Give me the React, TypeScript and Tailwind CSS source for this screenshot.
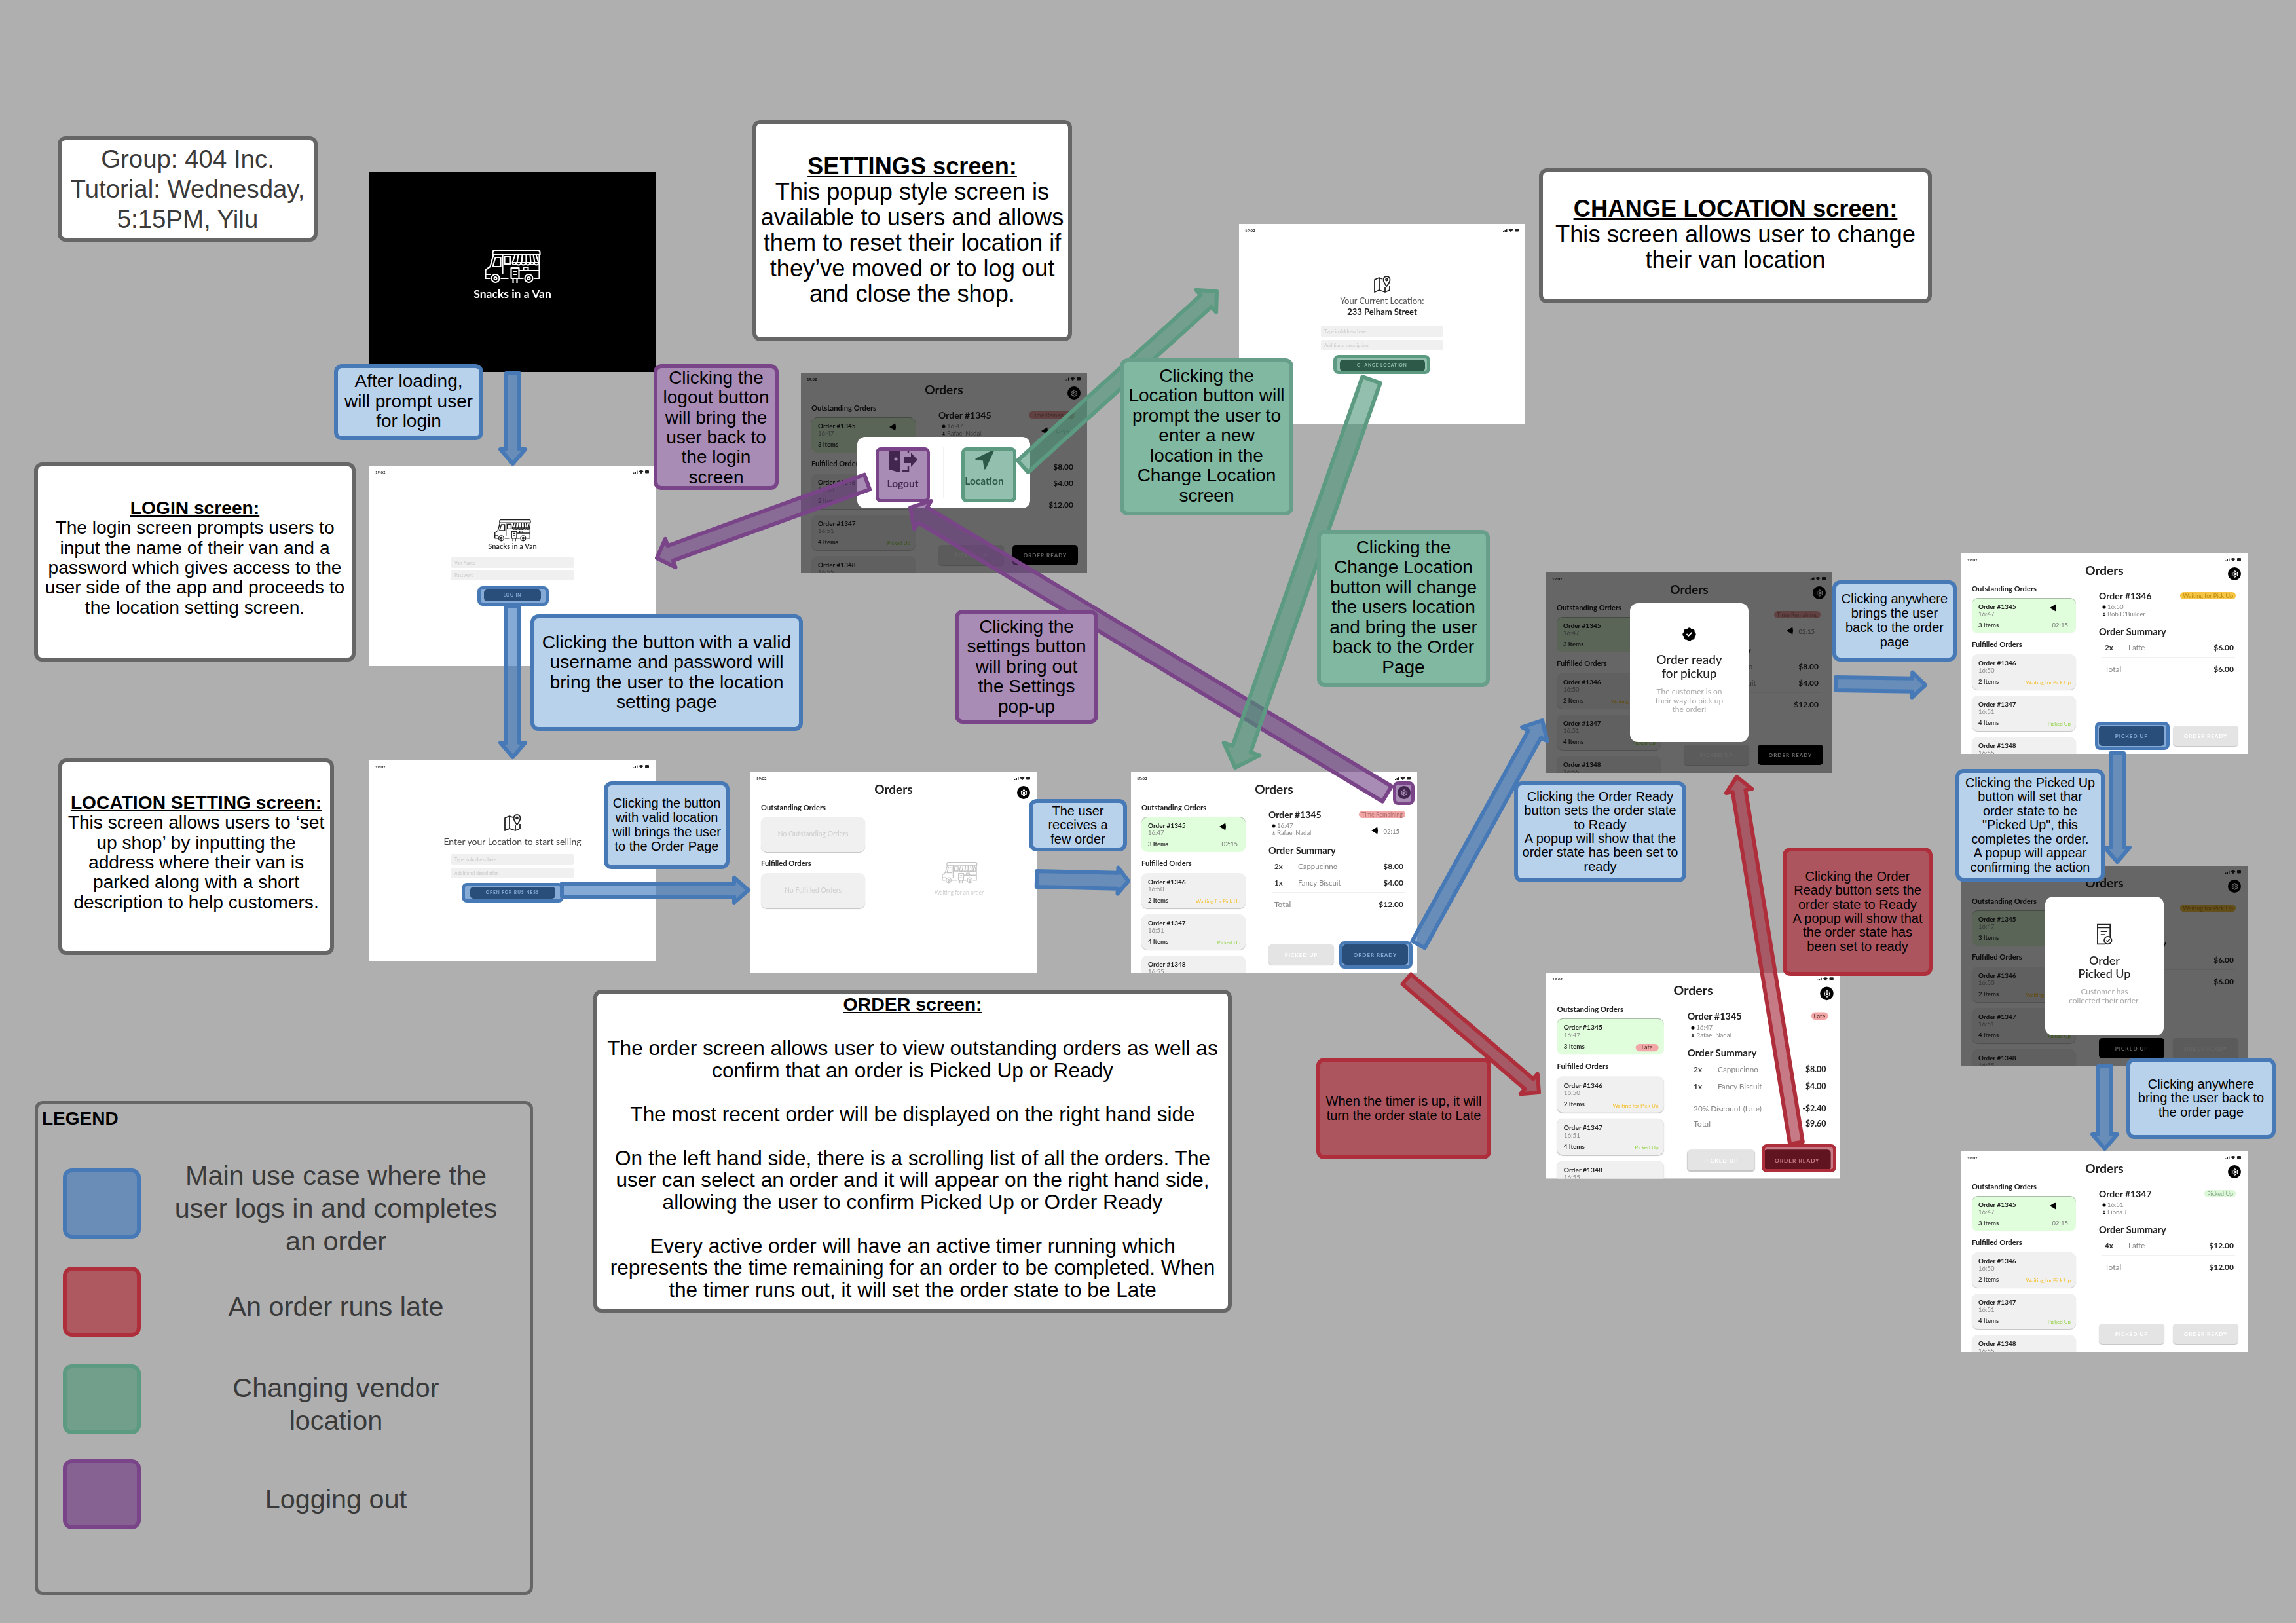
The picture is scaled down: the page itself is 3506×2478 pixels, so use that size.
import { BadgeCheck, Settings, User, Clock } from "lucide-react";
import type { ReactNode } from "react";

type Item = [string, string, string];

type Detail = {
  id: string;
  badge: string;
  badgeClass: string;
  time: string;
  name: string;
  timer?: boolean;
  items: Item[];
  discount?: string;
  total: string;
  picked?: boolean;
  ready?: boolean;
  late?: boolean;
};

const order1345: Detail = {
  id: "1345",
  badge: "Time Remaining",
  badgeClass: "bg-[#f3a6a6] text-[#a86a6a]",
  time: "16:47",
  name: "Rafael Nadal",
  timer: true,
  items: [
    ["2x", "Cappucinno", "$8.00"],
    ["1x", "Fancy Biscuit", "$4.00"],
  ],
  total: "$12.00",
  ready: true,
};

const order1346: Detail = {
  id: "1346",
  badge: "Waiting for Pick Up",
  badgeClass: "bg-[#f7c544] text-[#b88a10]",
  time: "16:50",
  name: "Bob D'Builder",
  items: [["2x", "Latte", "$6.00"]],
  total: "$6.00",
  picked: true,
};

const order1347: Detail = {
  id: "1347",
  badge: "Picked Up",
  badgeClass: "bg-[#dcf8d8] text-[#8aa888]",
  time: "16:51",
  name: "Fiona J",
  items: [["4x", "Latte", "$12.00"]],
  total: "$12.00",
};

const order1345Late: Detail = {
  id: "1345",
  badge: "Late",
  badgeClass: "bg-[#f3a6a6] text-[#5a3a3a] font-bold",
  time: "16:47",
  name: "Rafael Nadal",
  items: [
    ["2x", "Cappucinno", "$8.00"],
    ["1x", "Fancy Biscuit", "$4.00"],
  ],
  discount: "-$2.40",
  total: "$9.60",
  ready: true,
  late: true,
};

const VanIcon = ({ className }: { className: string }) => (
  <svg viewBox="0 0 86 52" fill="none" stroke="currentColor" strokeWidth="2.200" strokeLinejoin="round" className={className}>
    <path d="M13 8V4a3 3 0 0 1 3-3h66a3 3 0 0 1 3 3v4z" />
    <path d="M14 8 9 26l-7 5v13h7M25 44h12M52 44h8M76 44h8V8M2 38h8" />
    <path d="M17 12h8v14H13z" />
    <path d="M28 8v30" />
    <rect x="31" y="11" width="9" height="11" />
    <path d="M47 8 43 20h40L79 8M52 8l-2 12M58 8l-1 12M64 8v12M70 8l1 12M75 8l2 12" />
    <path d="M43 20a3 3 0 0 0 6 0 3 3 0 0 0 7 0 3 3 0 0 0 7 0 3 3 0 0 0 7 0 3 3 0 0 0 6 0 3 3 0 0 0 7 0" />
    <path d="M53 32h31M60 32v-5h7v5" />
    <rect x="41" y="28" width="12" height="16" />
    <path d="M44 33h6M44 38h6M44 44v7M50 44v7" />
    <circle cx="17" cy="44" r="6" />
    <circle cx="17" cy="44" r="2" />
    <circle cx="68" cy="44" r="6" />
    <circle cx="68" cy="44" r="2" />
  </svg>
);

const MapIcon = () => (
  <svg viewBox="0 0 26 26" fill="none" stroke="#222" strokeWidth="1.800" strokeLinejoin="round" className="h-[26px] w-[26px]">
    <path d="M13 5 8 3 1 6v19l7-3 9 3 7-3v-7" />
    <path d="M8 3v19M17 17v8" />
    <path d="M19.500 1a5 5 0 0 0-5 5c0 4 5 10 5 10s5-6 5-10a5 5 0 0 0-5-5z" />
    <circle cx="19.500" cy="6" r="1.500" />
  </svg>
);

const Pie = ({ className }: { className: string }) => (
  <svg viewBox="0 0 12 12" className={className}>
    <path d="M0 6 10 0q2 6 0 12z" fill="#000" />
  </svg>
);

const StatusBar = () => (
  <div className="flex h-[16px] items-center justify-between px-[9px] pt-[2px] text-[6px] font-bold text-[#222]">
    <span>19:02</span>
    <svg viewBox="0 0 25 6" className="h-[6px] w-[25px]" fill="#222">
      <path d="M0 6h1.500V4.500H0zM2.500 6H4V3H2.500zM5 6h1.500V1.500H5z" />
      <path d="M8.500 2.500a5 5 0 0 1 7 0L12 6.500z" />
      <rect x="18" y="1" width="6" height="4.500" rx="1" />
    </svg>
  </div>
);

const Field = ({ label, className }: { label: string; className?: string }) => (
  <div className={`flex h-[16px] w-[187px] items-center rounded-[2px] bg-[#f0f0f0] px-[5px] text-[7px] text-[#c8c8c8] ${className ?? ""}`}>
    {label}
  </div>
);

const Shell = ({ className, children }: { className: string; children: ReactNode }) => (
  <div className={`absolute h-[306px] w-[437px] overflow-hidden bg-white font-['Lato',sans-serif] text-black blur-[0.4px] ${className}`}>
    {children}
  </div>
);

const OrderCard = ({
  id,
  time,
  items,
  status,
  statusClass,
  selected,
  timer,
  late,
}: {
  id: string;
  time: string;
  items: string;
  status?: string;
  statusClass?: string;
  selected?: boolean;
  timer?: boolean;
  late?: boolean;
}) => (
  <div
    className={`relative mb-[9px] h-[54px] shrink-0 rounded-[9px] px-[10px] pt-[8px] ${
      selected
        ? "bg-[#e0fddc] shadow-[inset_0_1px_0_#a8bca8]"
        : "bg-[#f0f0f0] shadow-[0_1px_1px_#c4c4c4]"
    }`}
  >
    <div className="text-[10px] font-bold leading-[11px] text-[#222]">Order #{id}</div>
    <div className="text-[9.500px] leading-[11px] text-[#888]">{time}</div>
    <div className="mt-[6px] flex items-center justify-between text-[9.500px] font-bold leading-[11px] text-[#333]">
      <span>{items}</span>
      {timer && <span className="mr-[2px] font-normal text-[#777]">02:15</span>}
    </div>
    {timer && <Pie className="absolute left-[119px] top-[9px] h-[12px] w-[11px]" />}
    {late && (
      <span className="absolute bottom-[5px] right-[8px] rounded-full bg-[#f3a6a6] px-[9px] text-[8.500px] font-bold leading-[11px] text-[#5a3a3a]">
        Late
      </span>
    )}
    {status && (
      <span className={`absolute bottom-[6px] right-[8px] text-[8px] leading-[10px] ${statusClass}`}>{status}</span>
    )}
  </div>
);

const OrderList = ({ late }: { late?: boolean }) => (
  <div className="flex h-full w-[159px] shrink-0 flex-col">
    <div className="text-[11.200px] font-bold leading-[14px] text-[#222]">Outstanding Orders</div>
    <div className="mt-[7px]">
      <OrderCard id="1345" time="16:47" items="3 Items" selected timer={!late} late={late} />
    </div>
    <div className="mt-px text-[11.200px] font-bold leading-[14px] text-[#222]">Fulfilled Orders</div>
    <div className="mt-[8px]">
      <OrderCard id="1346" time="16:50" items="2 Items" status="Waiting for Pick Up" statusClass="text-[#f5bd20]" />
      <OrderCard id="1347" time="16:51" items="4 Items" status="Picked Up" statusClass="text-[#8ed13f]" />
      <OrderCard id="1348" time="16:55" items="2 Items" />
    </div>
  </div>
);

const ActionButton = ({ label, active }: { label: string; active?: boolean }) => (
  <div
    className={`flex h-[31px] w-[100px] items-center justify-center rounded-[5px] text-[8px] font-bold tracking-[1px] text-white ${
      active ? "bg-black" : "bg-[#e4e4e4] shadow-[0_1px_1px_#c4c4c4]"
    }`}
  >
    {label}
  </div>
);

const OrderPane = ({ order }: { order: Detail }) => (
  <div className="ml-[35px] flex h-full w-[214px] flex-col">
    <div className="mt-[10px] flex h-[14px] items-center justify-between pr-[5px]">
      <span className="text-[14px] font-bold text-[#222]">Order #{order.id}</span>
      <span className={`rounded-full px-[4px] text-[9px] leading-[11px] ${order.badgeClass}`}>{order.badge}</span>
    </div>
    <div className="mt-[5px] flex justify-between pl-[5px] pr-[14px]">
      <div className="text-[9.500px] leading-[11px] text-[#888]">
        <div className="flex items-center gap-[2px]">
          <Clock className="h-[6px] w-[6px] fill-black" />
          {order.time}
        </div>
        <div className="flex items-center gap-[2px]">
          <User className="h-[6px] w-[6px] fill-black" />
          {order.name}
        </div>
      </div>
      {order.timer && (
        <div className="flex items-end gap-[8px] text-[9.500px] leading-[14px] text-[#777]">
          <Pie className="mb-[3px] h-[12px] w-[11px]" />
          <span>02:15</span>
        </div>
      )}
    </div>
    <div className="mt-[15px] h-[14px] text-[14.600px] font-bold leading-[14px] text-[#222]">Order Summary</div>
    <div className="mt-[10px] flex flex-col gap-[11px]">
      {order.items.map(([qty, name, price]) => (
        <div key={name} className="flex h-[14px] items-center pl-[9px] pr-[8px] text-[11.500px]">
          <span className="w-[36px] font-bold text-[#333]">{qty}</span>
          <span className="text-[#888]">{name}</span>
          <span className="ml-auto text-[12px] font-bold text-[#222]">{price}</span>
        </div>
      ))}
    </div>
    <div className="ml-[5px] mr-[6px] mt-[7px] h-px bg-[#f0f0f0]" />
    {order.discount && (
      <div className="mt-[11px] flex h-[14px] items-center pl-[9px] pr-[8px] text-[11.500px] text-[#888]">
        <span>20% Discount (Late)</span>
        <span className="ml-auto text-[12px] font-bold text-[#222]">{order.discount}</span>
      </div>
    )}
    <div className={`${order.discount ? "mt-[9px]" : "mt-[11px]"} flex h-[14px] items-center pl-[9px] pr-[8px] text-[12px] text-[#888]`}>
      <span>Total</span>
      <span className="ml-auto font-bold text-[#222]">{order.total}</span>
    </div>
    <div className="mb-[12px] mt-auto flex gap-[13px]">
      <ActionButton label="PICKED UP" active={order.picked} />
      <ActionButton label="ORDER READY" active={order.ready} />
    </div>
  </div>
);

const Gear = () => (
  <div className="absolute right-[10px] top-[21px] flex h-[20px] w-[20px] items-center justify-center rounded-full bg-black">
    <Settings className="h-[11px] w-[11px] text-white" strokeWidth={2.5} />
  </div>
);

const OrdersFrame = ({ left, right }: { left: ReactNode; right: ReactNode }) => (
  <>
    <StatusBar />
    <div className="h-[31px] text-center text-[19px] font-bold leading-[20px] text-[#222]">Orders</div>
    <Gear />
    <div className="flex h-[259px] pl-[16px]">
      {left}
      {right}
    </div>
  </>
);

const OrdersScreen = ({ order, className, children }: { order: Detail; className: string; children?: ReactNode }) => (
  <Shell className={className}>
    <OrdersFrame left={<OrderList late={order.late} />} right={<OrderPane order={order} />} />
    {children}
  </Shell>
);

const EmptyCard = ({ label }: { label: string }) => (
  <div className="flex h-[54px] shrink-0 items-center justify-center rounded-[9px] bg-[#f0f0f0] text-[10.500px] text-[#cfcfcf] shadow-[0_1px_1px_#c4c4c4]">
    {label}
  </div>
);

const EmptyOrdersScreen = ({ className }: { className: string }) => (
  <Shell className={className}>
    <OrdersFrame
      left={
        <div className="flex h-full w-[159px] shrink-0 flex-col">
          <div className="text-[11.200px] font-bold leading-[14px] text-[#222]">Outstanding Orders</div>
          <div className="mt-[7px]">
            <EmptyCard label="No Outstanding Orders" />
          </div>
          <div className="mt-[10px] text-[11.200px] font-bold leading-[14px] text-[#222]">Fulfilled Orders</div>
          <div className="mt-[8px]">
            <EmptyCard label="No Fulfilled Orders" />
          </div>
        </div>
      }
      right={
        <div className="flex flex-1 flex-col items-center pl-[50px] pr-[25px] pt-[90px]">
          <VanIcon className="h-[33px] w-[56px] text-[#c4c4c4]" />
          <div className="mt-[8px] text-[8.500px] text-[#cfcfcf]">Waiting for an order</div>
        </div>
      }
    />
  </Shell>
);

const Dim = () => <div className="absolute inset-0 bg-black/60" />;

const PopupCard = ({ children }: { children: ReactNode }) => (
  <div className="absolute left-[128px] top-[47px] flex h-[212px] w-[181px] flex-col items-center rounded-[12px] bg-white text-center">
    {children}
  </div>
);

const LogoutIcon = () => (
  <svg viewBox="0 0 44 38" className="h-[38px] w-[44px]" fill="#000">
    <path d="M2 4l13-4a2 2 0 0 1 3 2v34a2 2 0 0 1-3 2L2 34a2 2 0 0 1-2-2V6a2 2 0 0 1 2-2z" />
    <circle cx="11" cy="18" r="2.500" fill="#fff" />
    <path d="M21 2h9v7M21 36h9v-7" fill="none" stroke="#000" strokeWidth="2.500" />
    <path d="M24 14h10V8l10 11-10 11v-6H24z" />
  </svg>
);

const LocationIcon = () => (
  <svg viewBox="0 0 32 32" className="h-[30px] w-[30px]" fill="#000">
    <path d="M30 2 3 15l12 1 2 14z" stroke="#000" strokeWidth="3" strokeLinejoin="round" />
  </svg>
);

const ReceiptIcon = () => (
  <svg viewBox="0 0 26 34" className="h-[34px] w-[25px]" fill="none" stroke="#222" strokeWidth="1.800">
    <path d="M14 32H2V1h20v19" />
    <path d="M2 6h20M7 12h10M7 17h7" />
    <circle cx="18.500" cy="26" r="6" />
    <path d="m16 26 2 2 3.500-4" />
  </svg>
);

type ArrowSpec = {
  from: [number, number];
  to: [number, number];
  width: number;
  head: number;
  headLength: number;
  color: keyof typeof arrowColors;
};

const arrowColors = {
  blue: { fill: "rgba(64,122,189,0.64)", stroke: "#4679b6" },
  purple: { fill: "rgba(112,63,132,0.6)", stroke: "#7a4488" },
  green: { fill: "rgba(75,150,120,0.6)", stroke: "#5c9a82" },
  red: { fill: "rgba(158,33,52,0.6)", stroke: "#ae2f3b" },
};

const arrows: ArrowSpec[] = [
  { from: [783, 570], to: [783, 708], width: 20, head: 38, headLength: 22, color: "blue" },
  { from: [783, 926], to: [783, 1156], width: 20, head: 38, headLength: 22, color: "blue" },
  { from: [858, 1359], to: [1143, 1359], width: 20, head: 38, headLength: 22, color: "blue" },
  { from: [1583, 1342], to: [1723, 1345], width: 24, head: 40, headLength: 16, color: "blue" },
  { from: [2166, 1442], to: [2355, 1100], width: 22, head: 44, headLength: 24, color: "blue" },
  { from: [2803, 1044], to: [2940, 1046], width: 20, head: 38, headLength: 20, color: "blue" },
  { from: [3233, 1150], to: [3233, 1316], width: 20, head: 38, headLength: 22, color: "blue" },
  { from: [3214, 1628], to: [3214, 1754], width: 20, head: 38, headLength: 22, color: "blue" },
  { from: [1324, 736], to: [1003, 852], width: 24, head: 46, headLength: 22, color: "purple" },
  { from: [2118, 1212], to: [1390, 775], width: 27, head: 50, headLength: 22, color: "purple" },
  { from: [1562, 712], to: [1858, 445], width: 24, head: 46, headLength: 22, color: "green" },
  { from: [2094, 580], to: [1886, 1172], width: 29, head: 58, headLength: 30, color: "green" },
  { from: [2743, 1745], to: [2652, 1186], width: 20, head: 40, headLength: 22, color: "red" },
  { from: [2148, 1495], to: [2350, 1668], width: 20, head: 40, headLength: 20, color: "red" },
];

const arrowPoints = ({ from, to, width, head, headLength }: ArrowSpec) => {
  const dx = to[0] - from[0];
  const dy = to[1] - from[1];
  const len = Math.hypot(dx, dy);
  const ux = dx / len;
  const uy = dy / len;
  const bx = to[0] - ux * headLength;
  const by = to[1] - uy * headLength;
  const side = (x: number, y: number, d: number) => `${x - uy * d},${y + ux * d}`;
  return [
    side(from[0], from[1], width / 2),
    side(bx, by, width / 2),
    side(bx, by, head / 2),
    `${to[0]},${to[1]}`,
    side(bx, by, -head / 2),
    side(bx, by, -width / 2),
    side(from[0], from[1], -width / 2),
  ].join(" ");
};

const ArrowLayer = () => (
  <svg viewBox="0 0 3506 2478" className="absolute left-0 top-0 h-[2478px] w-[3506px]">
    {arrows.map((a) => (
      <polygon
        key={a.from.join("-")}
        points={arrowPoints(a)}
        fill={arrowColors[a.color].fill}
        stroke={arrowColors[a.color].stroke}
        strokeWidth="6"
        strokeLinejoin="round"
      />
    ))}
  </svg>
);

const Note = ({ className, children }: { className: string; children: ReactNode }) => (
  <div className={`absolute flex items-center justify-center whitespace-nowrap rounded-[12px] border-[6px] text-center text-black ${className}`}>
    <div>{children}</div>
  </div>
);

const Heading = ({ className, children }: { className?: string; children: ReactNode }) => (
  <div className={`font-bold underline ${className ?? ""}`}>{children}</div>
);

const blueNote = "border-[#4679b6] bg-[#b8d2ec]";
const purpleNote = "border-[#7a4488] bg-[#a98cb5]";
const greenNote = "border-[#679f8a] bg-[#81b8a2]";
const redNote = "border-[#ae2f3b] bg-[#ad555e]";
const whiteNote = "border-[#666666] bg-white";

const mark = "absolute rounded-[8px] border-[5px]";
const markBlue = `${mark} border-[#4679b6] bg-[rgba(64,122,189,0.64)]`;
const markPurple = `${mark} border-[#7a4488] bg-[rgba(112,63,132,0.6)]`;
const markGreen = `${mark} border-[#5c9a82] bg-[rgba(75,150,120,0.6)]`;
const markRed = `${mark} border-[#ae2f3b] bg-[rgba(158,33,52,0.6)]`;

const LegendRow = ({ swatch, className, children }: { swatch: string; className: string; children: ReactNode }) => (
  <div className={`flex h-[107px] items-center ${className}`}>
    <div className={`h-[107px] w-[119px] shrink-0 rounded-[14px] border-[6px] ${swatch}`} />
    <div className="flex-1 pl-[4px] pt-[14px] text-center text-[41.400px] leading-[50px] text-[#3a3a3a]">{children}</div>
  </div>
);

export default function App() {
  return (
    <div className="relative h-[2478px] w-[3506px] overflow-hidden bg-[#afafaf] font-['Liberation_Sans',Arial,sans-serif]">
      {/* splash */}
      <Shell className="left-[564px] top-[262px] !bg-black">
        <div className="flex flex-col items-center pt-[119px] text-white">
          <VanIcon className="h-[52px] w-[87px]" />
          <div className="mt-[6px] text-[17.500px] font-bold leading-[20px]">Snacks in a Van</div>
        </div>
      </Shell>

      {/* login */}
      <Shell className="left-[564px] top-[711px]">
        <StatusBar />
        <div className="flex flex-col items-center pt-[66px]">
          <VanIcon className="h-[34px] w-[57px] text-[#222]" />
          <div className="mt-[1px] text-[11px] font-bold leading-[11px] text-[#333]">Snacks in a Van</div>
          <Field label="Van Name" className="mt-[12px]" />
          <Field label="Password" className="mt-[3px]" />
          <div className="mt-[14px] flex h-[18px] w-[87px] items-center justify-center rounded-[5px] bg-black text-[6.500px] font-bold tracking-[1px] text-white">
            LOG IN
          </div>
        </div>
      </Shell>

      {/* location setting */}
      <Shell className="left-[564px] top-[1161px]">
        <StatusBar />
        <div className="flex flex-col items-center pt-[66px]">
          <MapIcon />
          <div className="mt-[7px] text-[14px] leading-[18px] text-[#444]">Enter your Location to start selling</div>
          <Field label="Type in Address here" className="mt-[10px]" />
          <Field label="Additional description" className="mt-[5px]" />
          <div className="mt-[13px] flex h-[18px] w-[130px] items-center justify-center rounded-[5px] bg-black text-[6.500px] font-bold tracking-[1px] text-white">
            OPEN FOR BUSINESS
          </div>
        </div>
      </Shell>

      {/* change location */}
      <Shell className="left-[1892px] top-[342px]">
        <StatusBar />
        <div className="flex flex-col items-center pt-[63px]">
          <MapIcon />
          <div className="mt-[4px] text-[13px] leading-[17px] text-[#555]">Your Current Location:</div>
          <div className="text-[13px] font-bold leading-[17px] text-[#222]">233 Pelham Street</div>
          <Field label="Type in Address here" className="mt-[13px]" />
          <Field label="Additional description" className="mt-[5px]" />
          <div className="mt-[14px] flex h-[18px] w-[130px] items-center justify-center rounded-[5px] bg-black text-[6.500px] font-bold tracking-[1px] text-white">
            CHANGE LOCATION
          </div>
        </div>
      </Shell>

      <EmptyOrdersScreen className="left-[1146px] top-[1179px]" />
      <OrdersScreen order={order1345} className="left-[1727px] top-[1179px]" />

      {/* settings popup */}
      <OrdersScreen order={order1345} className="left-[1223px] top-[569px]">
        <Dim />
        <div className="absolute left-[86px] top-[98px] flex h-[109px] w-[264px] rounded-[12px] bg-white px-[28px] py-[16px]">
          <div className="flex w-[83px] flex-col items-center">
            <LogoutIcon />
            <div className="mt-[6px] text-[15.500px] font-bold text-black">Logout</div>
          </div>
          <div className="flex flex-1 justify-center">
            <div className="h-full w-px bg-[#f2f2f2]" />
          </div>
          <div className="flex w-[84px] flex-col items-center pt-[4px]">
            <LocationIcon />
            <div className="mt-[6px] text-[15.500px] font-bold text-black">Location</div>
          </div>
        </div>
      </OrdersScreen>

      {/* order ready popup */}
      <OrdersScreen order={order1345} className="left-[2361px] top-[874px]">
        <Dim />
        <PopupCard>
          <BadgeCheck className="mt-[34px] h-[27px] w-[27px] fill-black text-white" strokeWidth={1.8} />
          <div className="mt-[14px] text-[19px] font-medium leading-[21px] text-[#222]">
            Order ready
            <br />
            for pickup
          </div>
          <div className="mt-[11px] text-[12px] leading-[13.500px] text-[#aaa]">
            The customer is on
            <br />
            their way to pick up
            <br />
            the order!
          </div>
        </PopupCard>
      </OrdersScreen>

      <OrdersScreen order={order1346} className="left-[2995px] top-[845px]" />

      {/* picked up popup */}
      <OrdersScreen order={{ ...order1346, picked: true }} className="left-[2995px] top-[1322px]">
        <Dim />
        <PopupCard>
          <div className="mt-[41px]">
            <ReceiptIcon />
          </div>
          <div className="mt-[12px] text-[18px] font-medium leading-[20px] text-[#222]">
            Order
            <br />
            Picked Up
          </div>
          <div className="mt-[11px] text-[12px] leading-[13.500px] text-[#aaa]">
            Customer has
            <br />
            collected their order.
          </div>
        </PopupCard>
      </OrdersScreen>

      <OrdersScreen order={order1347} className="left-[2995px] top-[1758px]" />
      <OrdersScreen order={order1345Late} className="left-[2361px] top-[1485px] origin-top-left scale-[1.0275]" />

      {/* highlighted controls */}
      <div className={`${markBlue} left-[729px] top-[895px] h-[30px] w-[109px]`} />
      <div className={`${markBlue} left-[705px] top-[1348px] h-[30px] w-[156px]`} />
      <div className={`${markBlue} left-[2045px] top-[1437px] h-[42px] w-[112px]`} />
      <div className={`${markBlue} left-[3199px] top-[1102px] h-[43px] w-[114px]`} />
      <div className={`${markPurple} left-[2127px] top-[1193px] h-[36px] w-[33px]`} />
      <div className={`${markPurple} left-[1337px] top-[683px] h-[84px] w-[83px]`} />
      <div className={`${markGreen} left-[1468px] top-[683px] h-[84px] w-[84px]`} />
      <div className={`${markGreen} left-[2036px] top-[542px] h-[29px] w-[148px]`} />
      <div className={`${markRed} left-[2690px] top-[1747px] h-[43px] w-[114px]`} />

      <ArrowLayer />

      <Note className={`${whiteNote} left-[88px] top-[208px] h-[161px] w-[397px] border-[5px] text-[38.400px] leading-[46px] !text-[#3a3a3a]`}>
        Group: 404 Inc.
        <br />
        Tutorial: Wednesday,
        <br />
        5:15PM, Yilu
      </Note>

      <Note className={`${whiteNote} left-[1149px] top-[183px] h-[338px] w-[488px] pb-[2px] text-[36.200px] leading-[39px]`}>
        <Heading>SETTINGS screen:</Heading>
        This popup style screen is
        <br />
        available to users and allows
        <br />
        them to reset their location if
        <br />
        they’ve moved or to log out
        <br />
        and close the shop.
      </Note>

      <Note className={`${whiteNote} left-[2350px] top-[257px] h-[206px] w-[600px] pb-[5px] text-[36.400px] leading-[39px]`}>
        <Heading>CHANGE LOCATION screen:</Heading>
        This screen allows user to change
        <br />
        their van location
      </Note>

      <Note className={`${whiteNote} left-[52px] top-[706px] h-[304px] w-[491px] pb-[14px] text-[28.200px] leading-[30.400px]`}>
        <Heading>LOGIN screen:</Heading>
        The login screen prompts users to
        <br />
        input the name of their van and a
        <br />
        password which gives access to the
        <br />
        user side of the app and proceeds to
        <br />
        the location setting screen.
      </Note>

      <Note className={`${whiteNote} left-[89px] top-[1158px] h-[300px] w-[421px] pb-[14px] text-[28.200px] leading-[30.400px]`}>
        <Heading>LOCATION SETTING screen:</Heading>
        This screen allows users to ‘set
        <br />
        up shop’ by inputting the
        <br />
        address where their van is
        <br />
        parked along with a short
        <br />
        description to help customers.
      </Note>

      <Note className={`${whiteNote} left-[906px] top-[1511px] h-[493px] w-[975px] !items-start text-[31.600px] leading-[33.500px]`}>
        <Heading className="text-[28.500px]">ORDER screen:</Heading>
        <br />
        The order screen allows user to view outstanding orders as well as
        <br />
        confirm that an order is Picked Up or Ready
        <br />
        <br />
        The most recent order will be displayed on the right hand side
        <br />
        <br />
        On the left hand side, there is a scrolling list of all the orders. The
        <br />
        user can select an order and it will appear on the right hand side,
        <br />
        allowing the user to confirm Picked Up or Order Ready
        <br />
        <br />
        Every active order will have an active timer running which
        <br />
        represents the time remaining for an order to be completed. When
        <br />
        the timer runs out, it will set the order state to be Late
      </Note>

      <Note className={`${blueNote} left-[510px] top-[556px] h-[116px] w-[228px] pb-[2px] text-[28px] leading-[30.400px]`}>
        After loading,
        <br />
        will prompt user
        <br />
        for login
      </Note>

      <Note className={`${purpleNote} left-[998px] top-[556px] h-[192px] w-[191px] pt-[2px] text-[28px] leading-[30.400px]`}>
        Clicking the
        <br />
        logout button
        <br />
        will bring the
        <br />
        user back to
        <br />
        the login
        <br />
        screen
      </Note>

      <Note className={`${blueNote} left-[810px] top-[938px] h-[178px] w-[416px] pb-[3px] text-[28.300px] leading-[30.400px]`}>
        Clicking the button with a valid
        <br />
        username and password will
        <br />
        bring the user to the location
        <br />
        setting page
      </Note>

      <Note className={`${blueNote} left-[922px] top-[1193px] h-[134px] w-[192px] text-[20px] leading-[21.800px]`}>
        Clicking the button
        <br />
        with valid location
        <br />
        will brings the user
        <br />
        to the Order Page
      </Note>

      <Note className={`${purpleNote} left-[1458px] top-[931px] h-[174px] w-[219px] text-[28px] leading-[30.400px]`}>
        Clicking the
        <br />
        settings button
        <br />
        will bring out
        <br />
        the Settings
        <br />
        pop-up
      </Note>

      <Note className={`${greenNote} left-[1710px] top-[547px] h-[240px] w-[265px] pb-[3px] text-[28px] leading-[30.400px]`}>
        Clicking the
        <br />
        Location button will
        <br />
        prompt the user to
        <br />
        enter a new
        <br />
        location in the
        <br />
        Change Location
        <br />
        screen
      </Note>

      <Note className={`${greenNote} left-[2011px] top-[809px] h-[240px] w-[264px] pb-[3px] text-[28px] leading-[30.400px]`}>
        Clicking the
        <br />
        Change Location
        <br />
        button will change
        <br />
        the users location
        <br />
        and bring the user
        <br />
        back to the Order
        <br />
        Page
      </Note>

      <Note className={`${blueNote} left-[1571px] top-[1220px] h-[80px] w-[150px] text-[20px] leading-[21.400px]`}>
        The user
        <br />
        receives a
        <br />
        few order
      </Note>

      <Note className={`${blueNote} left-[2312px] top-[1193px] h-[154px] w-[263px] text-[20px] leading-[21.400px]`}>
        Clicking the Order Ready
        <br />
        button sets the order state
        <br />
        to Ready
        <br />
        A popup will show that the
        <br />
        order state has been set to
        <br />
        ready
      </Note>

      <Note className={`${blueNote} left-[2798px] top-[886px] h-[124px] w-[190px] text-[20px] leading-[21.800px]`}>
        Clicking anywhere
        <br />
        brings the user
        <br />
        back to the order
        <br />
        page
      </Note>

      <Note className={`${blueNote} left-[2986px] top-[1174px] h-[172px] w-[228px] text-[19.800px] leading-[21.400px]`}>
        Clicking the Picked Up
        <br />
        button will set thar
        <br />
        order state to be
        <br />
        &quot;Picked Up&quot;, this
        <br />
        completes the order.
        <br />
        A popup will appear
        <br />
        confirming the action
      </Note>

      <Note className={`${redNote} left-[2722px] top-[1294px] h-[196px] w-[229px] text-[20px] leading-[21.400px]`}>
        Clicking the Order
        <br />
        Ready button sets the
        <br />
        order state to Ready
        <br />
        A popup will show that
        <br />
        the order state has
        <br />
        been set to ready
      </Note>

      <Note className={`${redNote} left-[2010px] top-[1615px] h-[155px] w-[267px] text-[20px] leading-[21.400px]`}>
        When the timer is up, it will
        <br />
        turn the order state to Late
      </Note>

      <Note className={`${blueNote} left-[3247px] top-[1615px] h-[124px] w-[228px] text-[20px] leading-[21.400px]`}>
        Clicking anywhere
        <br />
        bring the user back to
        <br />
        the order page
      </Note>

      {/* legend */}
      <div className="absolute left-[53px] top-[1681px] h-[754px] w-[761px] rounded-[12px] border-[5px] border-[#666666] pl-[38px] pr-[2px]">
        <div className="-ml-[32px] mt-[6px] text-[28px] font-bold leading-[32px] text-black">LEGEND</div>
        <LegendRow swatch="border-[#4679b6] bg-[#6a8db8]" className="mt-[60px]">
          Main use case where the
          <br />
          user logs in and completes
          <br />
          an order
        </LegendRow>
        <LegendRow swatch="border-[#ae2f3b] bg-[#ae5860]" className="mt-[43px]">
          An order runs late
        </LegendRow>
        <LegendRow swatch="border-[#5c9a82] bg-[#729e8c]" className="mt-[42px]">
          Changing vendor
          <br />
          location
        </LegendRow>
        <LegendRow swatch="border-[#7a4488] bg-[#866293]" className="mt-[38px]">
          Logging out
        </LegendRow>
      </div>
    </div>
  );
}
